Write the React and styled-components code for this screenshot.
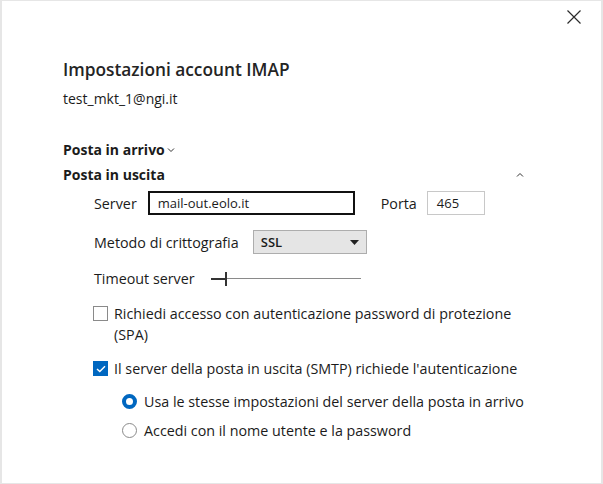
import React from "react";
import styled, { createGlobalStyle } from "styled-components";

const Global = createGlobalStyle`
  html, body { margin: 0; padding: 0; background: #f0f0f0; }
  body { font-family: "Open Sans", "Noto Sans", sans-serif; color: #1b1b1b; }
  * { box-sizing: border-box; }
`;

const Window = styled.div`
  width: 603px;
  height: 484px;
  background: #fff;
  border: 1px solid #e6e6e6;
  border-left-width: 2px;
  border-right-width: 2px;
  display: flex;
  flex-direction: column;
`;

const Header = styled.div`
  height: 30px;
  display: flex;
  justify-content: flex-end;
  align-items: center;
  padding-right: 19px;
`;

const CloseBtn = styled.button`
  width: 16px;
  height: 16px;
  margin-top: 1px;
  padding: 0;
  border: 0;
  background: transparent;
  display: flex;
  align-items: center;
  justify-content: center;
`;

const Content = styled.div`
  padding-left: 61px;
  display: flex;
  flex-direction: column;
  width: 526px;
`;

const Title = styled.h1`
  margin: 27px 0 0;
  font-size: 17.3px;
  line-height: 24px;
  font-weight: 600;
  color: #242424;
`;

const Email = styled.div`
  margin-top: 7px;
  font-size: 14px;
  line-height: 20px;
`;

const SectionRow = styled.div`
  margin-top: ${(p) => p.$mt}px;
  display: flex;
  align-items: center;
  justify-content: ${(p) => (p.$spread ? "space-between" : "flex-start")};
  font-size: 14px;
  line-height: 20px;
  font-weight: 700;
`;

const Indent = styled.div`
  padding-left: ${(p) => p.$pl}px;
  margin-top: ${(p) => p.$mt}px;
  display: flex;
  align-items: ${(p) => (p.$top ? "flex-start" : "center")};
  font-size: 14.3px;
  line-height: 21px;
`;

const Label = styled.span`
  margin-right: ${(p) => p.$mr}px;
`;

const TextInput = styled.div`
  width: ${(p) => p.$w}px;
  height: 24px;
  border: ${(p) => (p.$focus ? "2px solid #111" : "1px solid #c8c8c8")};
  padding-left: ${(p) => (p.$focus ? 8 : 9)}px;
  display: flex;
  align-items: center;
  font-size: 13px;
  background: #fff;
  margin-right: ${(p) => p.$mr || 0}px;
`;

const Select = styled.div`
  width: 114px;
  height: 24px;
  background: #e5e5e5;
  border: 1px solid #adadad;
  display: flex;
  align-items: center;
  justify-content: space-between;
  padding: 0 7px 0 7px;
  font-size: 13px;
  font-weight: 600;
`;

const SliderWrap = styled.div`
  margin-left: 16px;
  width: 150px;
  height: 16px;
  display: flex;
  align-items: center;
`;

const TrackFill = styled.div`
  width: 14px;
  height: 2px;
  background: #333;
`;

const Thumb = styled.div`
  width: 2px;
  height: 14px;
  background: #333;
`;

const Track = styled.div`
  flex: 1;
  height: 1px;
  background: #8a8a8a;
`;

const Box = styled.span`
  flex: none;
  width: 15px;
  height: 15px;
  margin-top: ${(p) => p.$mt || 0}px;
  margin-right: 6px;
  border: ${(p) => (p.$checked ? "none" : "1px solid #8a8a8a")};
  background: ${(p) => (p.$checked ? "#0067c0" : "#fff")};
  display: flex;
  align-items: center;
  justify-content: center;
`;

const Radio = styled.span`
  flex: none;
  width: 15px;
  height: 15px;
  border-radius: 50%;
  margin-right: 7px;
  border: ${(p) => (p.$checked ? "4px solid #0067c0" : "1px solid #8a8a8a")};
  background: #fff;
`;

const Chevron = ({ up }) => (
  <svg width="8" height="6" viewBox="0 0 8 6" style={{ marginLeft: up ? 0 : 2, marginRight: up ? 4 : 0 }}>
    <path d={up ? "M1 4.5 L4 1.5 L7 4.5" : "M1 1.5 L4 4.5 L7 1.5"} fill="none" stroke="#333" strokeWidth="1" />
  </svg>
);

export default function App() {
  return (
    <>
      <Global />
      <Window>
        <Header>
          <CloseBtn aria-label="Chiudi">
            <svg width="14" height="14" viewBox="0 0 14 14">
              <path d="M0.5 0.5 L13.5 13.5 M13.5 0.5 L0.5 13.5" stroke="#2b2b2b" strokeWidth="1.2" />
            </svg>
          </CloseBtn>
        </Header>
        <Content>
          <Title>Impostazioni account IMAP</Title>
          <Email>test_mkt_1@ngi.it</Email>
          <SectionRow $mt={31}>
            Posta in arrivo
            <Chevron />
          </SectionRow>
          <SectionRow $mt={5} $spread>
            Posta in uscita
            <Chevron up />
          </SectionRow>
          <Indent $pl={31} $mt={6}>
            <Label $mr={11}>Server</Label>
            <TextInput $w={207} $focus $mr={26}>mail-out.eolo.it</TextInput>
            <Label $mr={10}>Porta</Label>
            <TextInput $w={58}>465</TextInput>
          </Indent>
          <Indent $pl={31} $mt={15}>
            <Label $mr={14}>Metodo di crittografia</Label>
            <Select>
              SSL
              <svg width="9" height="5" viewBox="0 0 9 5">
                <path d="M0 0 L9 0 L4.5 5 Z" fill="#222" />
              </svg>
            </Select>
          </Indent>
          <Indent $pl={31} $mt={14}>
            <Label>Timeout server</Label>
            <SliderWrap>
              <TrackFill />
              <Thumb />
              <Track />
            </SliderWrap>
          </Indent>
          <Indent $pl={30} $mt={14} $top>
            <Box $mt={3} />
            <span>
              Richiedi accesso con autenticazione password di protezione
              <br />
              (SPA)
            </span>
          </Indent>
          <Indent $pl={30} $mt={13}>
            <Box $checked>
              <svg width="10" height="8" viewBox="0 0 10 8">
                <path d="M1 4 L3.8 6.6 L9 1.2" fill="none" stroke="#fff" strokeWidth="1.4" />
              </svg>
            </Box>
            <span>Il server della posta in uscita (SMTP) richiede l'autenticazione</span>
          </Indent>
          <Indent $pl={59} $mt={12}>
            <Radio $checked />
            <span>Usa le stesse impostazioni del server della posta in arrivo</span>
          </Indent>
          <Indent $pl={59} $mt={8}>
            <Radio />
            <span>Accedi con il nome utente e la password</span>
          </Indent>
        </Content>
      </Window>
    </>
  );
}
